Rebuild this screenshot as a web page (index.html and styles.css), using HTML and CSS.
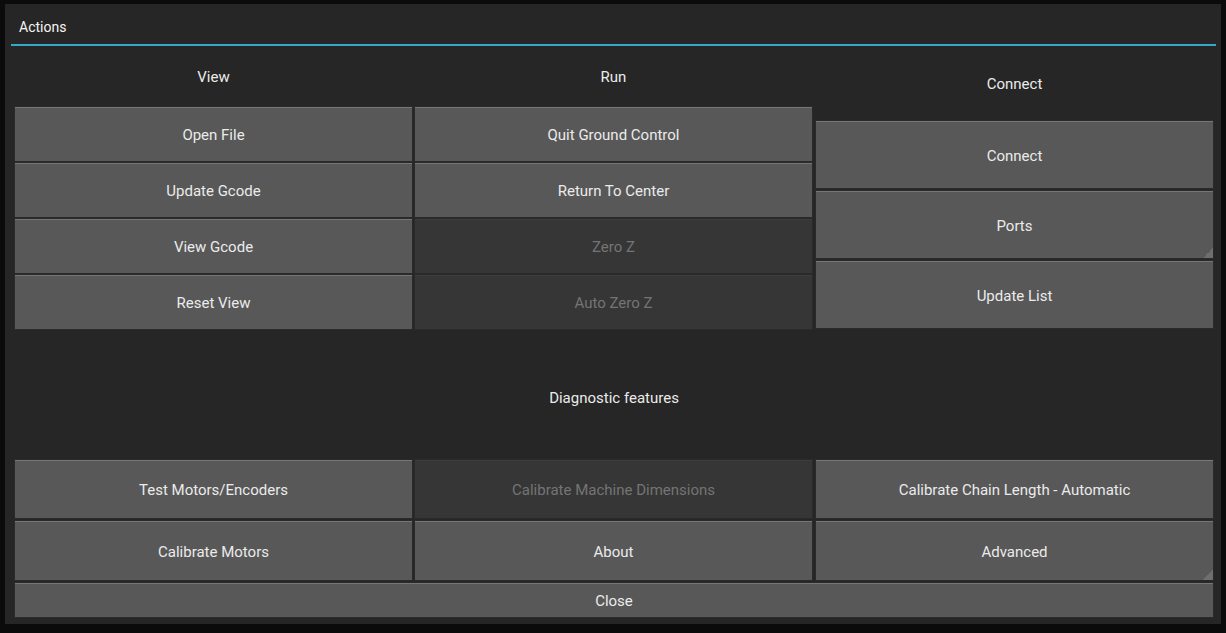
FILE: index.html
```html
<!DOCTYPE html>
<html>
<head>
<meta charset="utf-8">
<link rel="stylesheet" href="styles.css">
</head>
<body>
<div class="popup">
  <div class="title">Actions</div>
  <div class="sep"></div>
  <div class="content">
    <div class="top">
      <div class="col">
        <div class="label label-a">View</div>
        <div class="stack stack-a">
          <div class="btn">Open File</div>
          <div class="btn">Update Gcode</div>
          <div class="btn">View Gcode</div>
          <div class="btn">Reset View</div>
        </div>
      </div>
      <div class="col">
        <div class="label label-a">Run</div>
        <div class="stack stack-a">
          <div class="btn">Quit Ground Control</div>
          <div class="btn">Return To Center</div>
          <div class="btn disabled">Zero Z</div>
          <div class="btn disabled">Auto Zero Z</div>
        </div>
      </div>
      <div class="col">
        <div class="label label-c">Connect</div>
        <div class="stack stack-c">
          <div class="btn">Connect</div>
          <div class="btn spinner">Ports</div>
          <div class="btn">Update List</div>
        </div>
      </div>
    </div>
    <div class="label diag">Diagnostic features</div>
    <div class="bottom">
      <div class="btn">Test Motors/Encoders</div>
      <div class="btn disabled">Calibrate Machine Dimensions</div>
      <div class="btn">Calibrate Chain Length - Automatic</div>
      <div class="btn">Calibrate Motors</div>
      <div class="btn">About</div>
      <div class="btn spinner">Advanced</div>
    </div>
    <div class="btn close">Close</div>
  </div>
</div>
</body>
</html>
```
FILE: styles.css
```css
html, body {
  margin: 0;
  padding: 0;
  background: #0b0b0b;
  width: 1226px;
  height: 633px;
  overflow: hidden;
  font-family: Roboto, "Liberation Sans", sans-serif;
  font-size: 15px;
  color: #ebebeb;
}

.popup {
  margin: 4px 0 0 5px;
  width: 1216px;
  height: 620px;
  background: #262626;
  box-sizing: border-box;
  display: flex;
  flex-direction: column;
}

.title {
  height: 40px;
  line-height: 46px;
  padding-left: 14px;
  font-size: 14px;
  color: #f5f5f5;
  box-sizing: border-box;
}

.sep {
  height: 2px;
  margin: 0 5px 0 6px;
  background: #33a9c9;
}

.content {
  padding: 0 8px 0 10px;
  display: flex;
  flex-direction: column;
}

.top {
  display: grid;
  grid-template-columns: 397px 398px 397px;
  column-gap: 3px;
}

.top > .col:nth-child(2) {
  width: 397px;
}

.col {
  display: flex;
  flex-direction: column;
}

.label {
  display: flex;
  align-items: center;
  justify-content: center;
  color: #ebebeb;
}

.label-a { height: 61px; }
.label-c { height: 75px; padding-top: 1px; box-sizing: border-box; }

.stack {
  display: flex;
  flex-direction: column;
  gap: 2px;
}

.stack-a .btn { height: 54px; padding-top: 1px; }
.stack-c { gap: 3px; }
.stack-c .btn { height: 67px; padding-top: 1px; }

.diag {
  height: 131px;
  padding-top: 6px;
  box-sizing: border-box;
}

.bottom {
  display: grid;
  grid-template-columns: 397px 398px 397px;
  grid-template-rows: 58px 59px;
  column-gap: 3px;
  row-gap: 3px;
}

.bottom > .btn:nth-child(3n+2) {
  width: 397px;
}

.btn {
  position: relative;
  background: #585858;
  border-top: 1px solid #767676;
  box-shadow: 0 0 0 1px #2a2a2a;
  display: flex;
  align-items: center;
  justify-content: center;
  box-sizing: border-box;
  color: #ebebeb;
}

.btn.disabled {
  background: #363636;
  border-top: 1px solid #3c3c3c;
  color: #747474;
}

.spinner::after {
  content: "";
  position: absolute;
  right: 0;
  bottom: 0;
  width: 10px;
  height: 10px;
  background: linear-gradient(135deg, transparent 50%, #6e6e6e 50%);
}

.bottom .btn { padding-top: 1px; }

.close {
  margin-top: 3px;
  width: 1198px;
  height: 34px;
  padding-top: 1px;
}
```
